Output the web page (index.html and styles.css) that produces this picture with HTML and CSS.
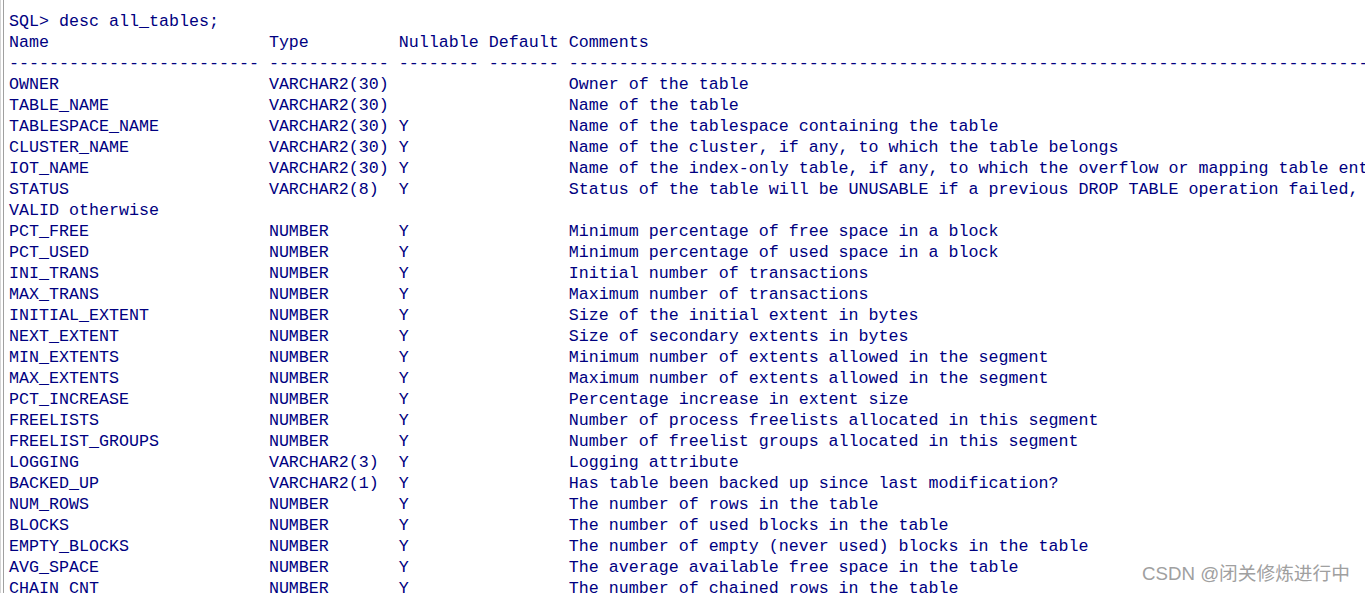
FILE: index.html
```html
<!DOCTYPE html>
<html>
<head>
<meta charset="utf-8">
<link rel="stylesheet" href="styles.css">
</head>
<body>
<div class="terminal">
<pre class="output">SQL&gt; desc all_tables;
Name                      Type         Nullable Default Comments
------------------------- ------------ -------- ------- ----------------------------------------------------------------------------------------------------------------------------
OWNER                     VARCHAR2(30)                  Owner of the table
TABLE_NAME                VARCHAR2(30)                  Name of the table
TABLESPACE_NAME           VARCHAR2(30) Y                Name of the tablespace containing the table
CLUSTER_NAME              VARCHAR2(30) Y                Name of the cluster, if any, to which the table belongs
IOT_NAME                  VARCHAR2(30) Y                Name of the index-only table, if any, to which the overflow or mapping table entry belongs
STATUS                    VARCHAR2(8)  Y                Status of the table will be UNUSABLE if a previous DROP TABLE operation failed,
VALID otherwise
PCT_FREE                  NUMBER       Y                Minimum percentage of free space in a block
PCT_USED                  NUMBER       Y                Minimum percentage of used space in a block
INI_TRANS                 NUMBER       Y                Initial number of transactions
MAX_TRANS                 NUMBER       Y                Maximum number of transactions
INITIAL_EXTENT            NUMBER       Y                Size of the initial extent in bytes
NEXT_EXTENT               NUMBER       Y                Size of secondary extents in bytes
MIN_EXTENTS               NUMBER       Y                Minimum number of extents allowed in the segment
MAX_EXTENTS               NUMBER       Y                Maximum number of extents allowed in the segment
PCT_INCREASE              NUMBER       Y                Percentage increase in extent size
FREELISTS                 NUMBER       Y                Number of process freelists allocated in this segment
FREELIST_GROUPS           NUMBER       Y                Number of freelist groups allocated in this segment
LOGGING                   VARCHAR2(3)  Y                Logging attribute
BACKED_UP                 VARCHAR2(1)  Y                Has table been backed up since last modification?
NUM_ROWS                  NUMBER       Y                The number of rows in the table
BLOCKS                    NUMBER       Y                The number of used blocks in the table
EMPTY_BLOCKS              NUMBER       Y                The number of empty (never used) blocks in the table
AVG_SPACE                 NUMBER       Y                The average available free space in the table
CHAIN_CNT                 NUMBER       Y                The number of chained rows in the table</pre>
<div class="watermark">CSDN @闭关修炼进行中</div>
</div>
</body>
</html>
```

FILE: styles.css
```css
html, body {
  margin: 0;
  padding: 0;
  background: #ffffff;
  overflow: hidden;
}

.terminal {
  position: relative;
  width: 1365px;
  height: 593px;
  overflow: hidden;
  box-sizing: border-box;
  border-left: 1px solid #d4d4d4;
  background: #ffffff;
}

.terminal::before {
  content: "";
  position: absolute;
  left: 1px;
  top: 0;
  bottom: 0;
  width: 1px;
  border-right: 1px solid #a0a0a0;
}

.output {
  margin: 0;
  padding: 11px 0 0 8px;
  font-family: "Liberation Mono", "Courier New", monospace;
  font-size: 16.66px;
  line-height: 21px;
  color: #000080;
  white-space: pre;
}

.watermark {
  position: absolute;
  left: 1141px;
  top: 562px;
  font-family: "Liberation Sans", Arial, "Noto Sans CJK SC", sans-serif;
  font-size: 18.7px;
  line-height: 24px;
  color: #a0a0a0;
  white-space: nowrap;
  text-shadow: 0 0 2px #ffffff, 0 0 2px #ffffff;
}
```
